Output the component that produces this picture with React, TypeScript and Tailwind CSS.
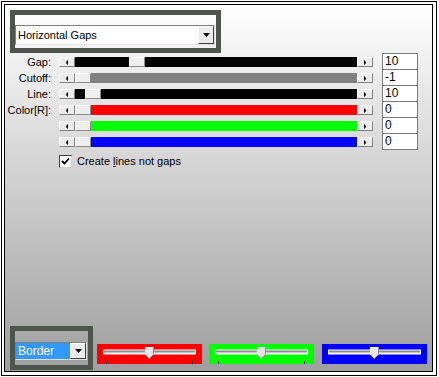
import React from 'react';

const FRAME = 'border-[#4f544f]';

const ArrowBtn: React.FC<{ dir: 'left' | 'right' }> = ({ dir }) => (
  <div className="w-[16px] h-full bg-[#ececec] border-t border-l border-t-white border-l-white border-b border-r border-b-[#808080] border-r-[#808080] flex items-center justify-center">
    <svg width="4" height="5" viewBox="0 0 4 5">
      {dir === 'left' ? <polygon points="3,0 3,5 0.5,2.5" fill="#000" /> : <polygon points="1,0 1,5 3.5,2.5" fill="#000" />}
    </svg>
  </div>
);

const Thumb = () => (
  <div className="w-[16px] h-full shrink-0 bg-[#efefef] border-t border-l border-t-white border-l-white border-b border-r border-b-[#8a8a8a] border-r-[#8a8a8a]" />
);

interface RowProps {
  label?: string;
  color: string;
  offset: number; // px of track before the thumb
  value: string;
  last?: boolean;
}

const SliderRow: React.FC<RowProps> = ({ label, color, offset, value, last }) => (
  <div className="flex h-[16px]">
    <div className="w-[46px] text-right text-[11px] leading-[16px] text-black pt-[1px]">{label}</div>
    <div className="ml-[8px] mt-[4px] w-[314px] h-[10px] flex">
      <ArrowBtn dir="left" />
      <div className="flex-1 flex h-full">
        <div className="h-full" style={{ width: offset, backgroundColor: color }} />
        <Thumb />
        <div className="flex-1 h-full" style={{ backgroundColor: color }} />
      </div>
      <ArrowBtn dir="right" />
    </div>
    <div
      className={`ml-[9px] w-[36px] h-[17px] bg-white border border-[#7c7c7c] text-[12px] leading-[15px] pl-[2px] text-black ${last ? '' : ''}`}
    >
      {value}
    </div>
  </div>
);

const ComboButton = () => (
  <div className="w-[16px] h-full bg-[#ececec] border border-t-white border-l-white border-b-[#404040] border-r-[#404040] flex items-center justify-center">
    <svg width="7" height="4" viewBox="0 0 7 4">
      <polygon points="0,0 7,0 3.5,4" fill="#000" />
    </svg>
  </div>
);

const TrackPanel: React.FC<{ bg: string }> = ({ bg }) => (
  <div className={`w-[105px] h-[20px] ${bg}`}>
    <svg width="105" height="20" viewBox="0 0 105 20">
      <rect x="6" y="5.5" width="93" height="5" fill="#ffffff" />
      <rect x="7" y="6.5" width="91" height="2" fill="#8c8c8c" />
      <line x1="9.5" y1="17" x2="9.5" y2="20" stroke="#000" strokeWidth="1" />
      <line x1="95.5" y1="17" x2="95.5" y2="20" stroke="#000" strokeWidth="1" />
      <polygon points="48.5,3.5 56.5,3.5 56.5,10.5 52.5,14.5 48.5,10.5" fill="#e6e6e6" stroke="#ffffff" strokeWidth="1" />
      <polyline points="56.5,3.5 56.5,10.5 52.5,14.5" fill="none" stroke="#8a8a8a" strokeWidth="1" />
    </svg>
  </div>
);

export default function App() {
  return (
    <div className="w-[439px] h-[377px] bg-white pl-px pt-px" style={{ fontFamily: '"Liberation Sans", Arial, sans-serif' }}>
      <div className="w-[436px] h-[375px] border border-black bg-white pt-[2px] pl-[2px] pr-[3px] pb-[3px]">
        <div className="h-full border border-black bg-linear-to-b from-white to-[#9f9f9f] flex flex-col">
          {/* filter choice */}
          <div className={`mt-[5px] ml-[5px] w-[211px] h-[43px] border-[5px] ${FRAME} pt-[10px]`}>
            <div className="w-[200px] h-[20px] bg-white border border-t-[#808080] border-l-[#808080] border-b-[#e0e0e0] border-r-[#e0e0e0] flex">
              <div className="flex-1 text-[11px] leading-[18px] pl-[2px] text-black">Horizontal Gaps</div>
              <ComboButton />
            </div>
          </div>

          <div className="flex flex-col">
            <SliderRow label="Gap:" color="#000000" offset={54} value="10" />
            <SliderRow label="Cutoff:" color="#808080" offset={0} value="-1" />
            <SliderRow label="Line:" color="#000000" offset={10} value="10" />
            <SliderRow label="Color[R]:" color="#ff0000" offset={0} value="0" />
            <SliderRow color="#00ff00" offset={0} value="0" />
            <SliderRow color="#0000ff" offset={0} value="0" last />
          </div>

          <div className="flex items-center mt-[4px] ml-[54px]">
            <div className="w-[13px] h-[13px] bg-white border border-t-[#404040] border-l-[#404040] border-b-[#d0d0d0] border-r-[#d0d0d0] flex items-center justify-center">
              <svg width="9" height="9" viewBox="0 0 9 9">
                <polyline points="1,4 3.5,6.5 8,1.5" fill="none" stroke="#000" strokeWidth="1.8" />
              </svg>
            </div>
            <span className="ml-[5px] text-[11px] text-black">
              Create <span className="underline">l</span>ines not gaps
            </span>
          </div>

          <div className="flex-1" />

          {/* bottom bar */}
          <div className="flex items-end ml-[5px] mb-px">
            <div className={`w-[83px] h-[44px] border-[5px] ${FRAME} pt-[11px]`}>
              <div className="w-[72px] h-[18px] bg-white border border-t-[#808080] border-l-[#808080] border-b-[#e0e0e0] border-r-[#e0e0e0] flex">
                <div className="w-[54px] h-full bg-[#3399ff] text-white text-[12px] leading-[16px] pl-[2px]">Border</div>
                <ComboButton />
              </div>
            </div>
            <div className="ml-[4px] mb-[6px]"><TrackPanel bg="bg-[#ff0000]" /></div>
            <div className="ml-[7px] mb-[6px]"><TrackPanel bg="bg-[#00ff00]" /></div>
            <div className="ml-[8px] mb-[6px]"><TrackPanel bg="bg-[#0000ff]" /></div>
          </div>
        </div>
      </div>
    </div>
  );
}
